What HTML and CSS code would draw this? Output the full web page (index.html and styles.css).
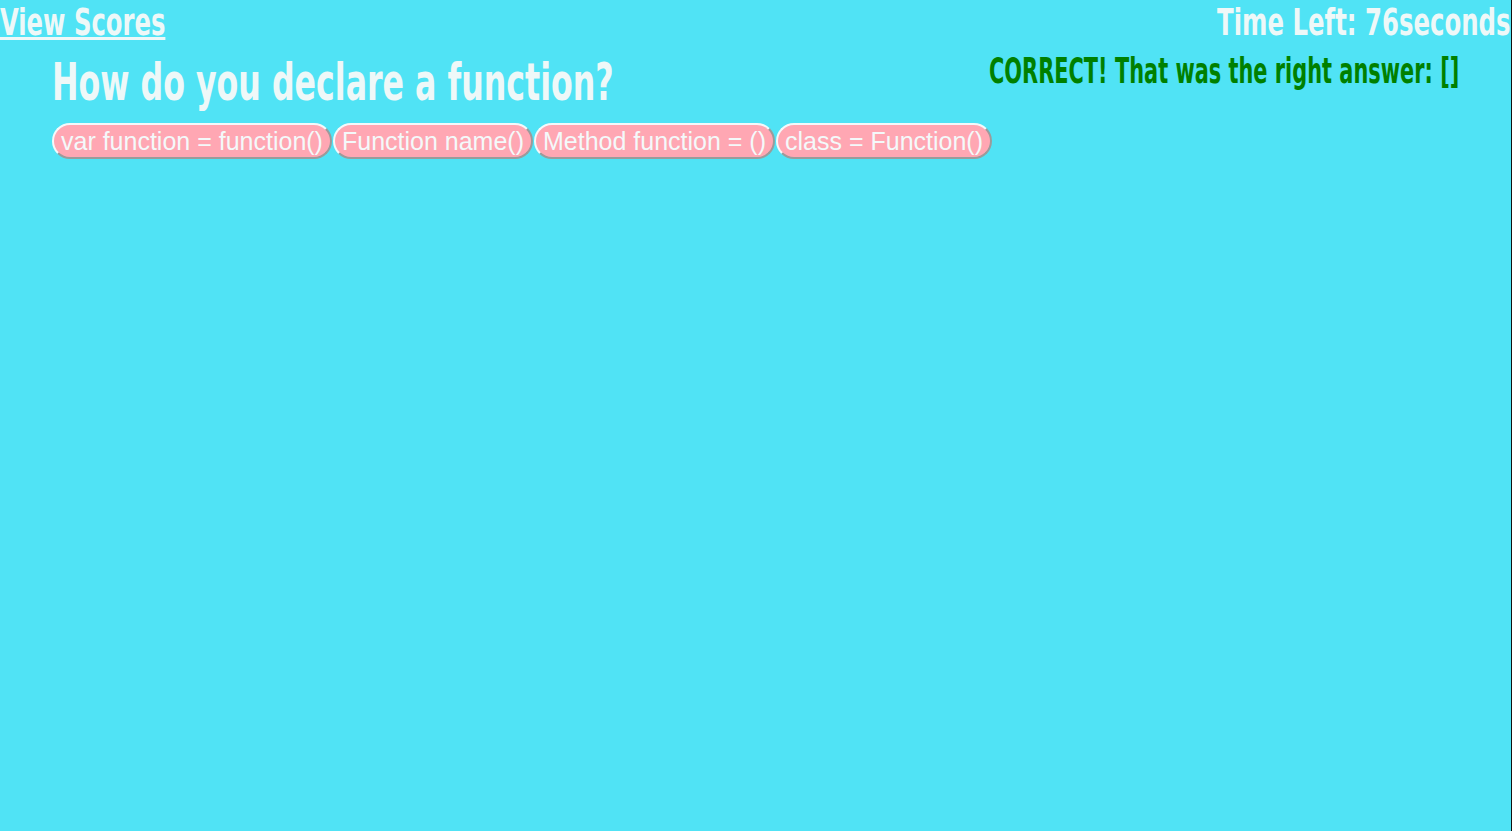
FILE: index.html
```html
<!DOCTYPE html>
<html lang="en">
<head>
<meta charset="utf-8">
<title>Code Quiz</title>
<link rel="stylesheet" href="styles.css">
</head>
<body>
<header class="topbar">
  <a class="scores-link" href="#"><span class="narrow narrow-left">View Scores</span></a>
  <div class="timer"><span class="narrow narrow-right">Time Left: 76seconds</span></div>
</header>
<main class="quiz">
  <section class="question">
    <h1 class="question-title"><span class="narrow narrow-left">How do you declare a function?</span></h1>
    <div class="choices">
      <button class="choice">var function = function()</button>
      <button class="choice">Function name()</button>
      <button class="choice">Method function = ()</button>
      <button class="choice">class = Function()</button>
    </div>
  </section>
  <p class="feedback"><span class="narrow narrow-left">CORRECT! That was the right answer: []</span></p>
</main>
</body>
</html>
```
FILE: styles.css
```css
html, body {
  margin: 0;
  padding: 0;
  height: 100%;
}
body {
  background: #50e3f5;
  font-family: "DejaVu Sans Condensed", "DejaVu Sans", sans-serif;
  color: #eef8f8;
  border-right: 1px solid #111;
  box-sizing: border-box;
  overflow: hidden;
}
.narrow {
  display: inline-block;
  white-space: nowrap;
  transform: scaleX(0.71);
}
.narrow-left { transform-origin: left center; }
.narrow-right { transform-origin: right center; }

.topbar {
  display: flex;
  justify-content: space-between;
  align-items: flex-start;
  height: 44px;
}
.scores-link, .timer {
  font-size: 38px;
  font-weight: bold;
  line-height: 44px;
  color: #eef8f8;
  white-space: nowrap;
}
.scores-link {
  text-decoration: none;
}
.scores-link .narrow {
  text-decoration: underline;
  text-decoration-thickness: 3px;
  text-underline-offset: 2px;
}
.timer .narrow { transform: scaleX(0.713); }

.quiz {
  display: grid;
  grid-template-columns: 937px 1fr;
  padding-left: 52px;
  overflow: hidden;
}
.question { min-width: 0; }
.question-title {
  margin: 9px 0 10px;
  font-size: 51px;
  line-height: 60px;
  font-weight: bold;
  white-space: nowrap;
}
.question-title .narrow { transform: scaleX(0.69); }

.choices {
  display: flex;
  gap: 1px;
}
.choice {
  flex: 0 0 auto;
  white-space: nowrap;
  font-family: "Liberation Sans", Arial, sans-serif;
  font-size: 25px;
  line-height: 28px;
  color: #f4f9fa;
  background: #ffa7b3;
  border: 2px solid;
  border-color: #f4f9fa #9b9b9b #9b9b9b #f4f9fa;
  border-radius: 18px;
  padding: 2px 7px 2px 7px;
  margin: 0;
}
.feedback {
  margin: 6px 0 0;
  font-size: 36px;
  line-height: 42px;
  font-weight: bold;
  color: #008000;
  white-space: nowrap;
}
.feedback .narrow { transform: scaleX(0.645); }
```
